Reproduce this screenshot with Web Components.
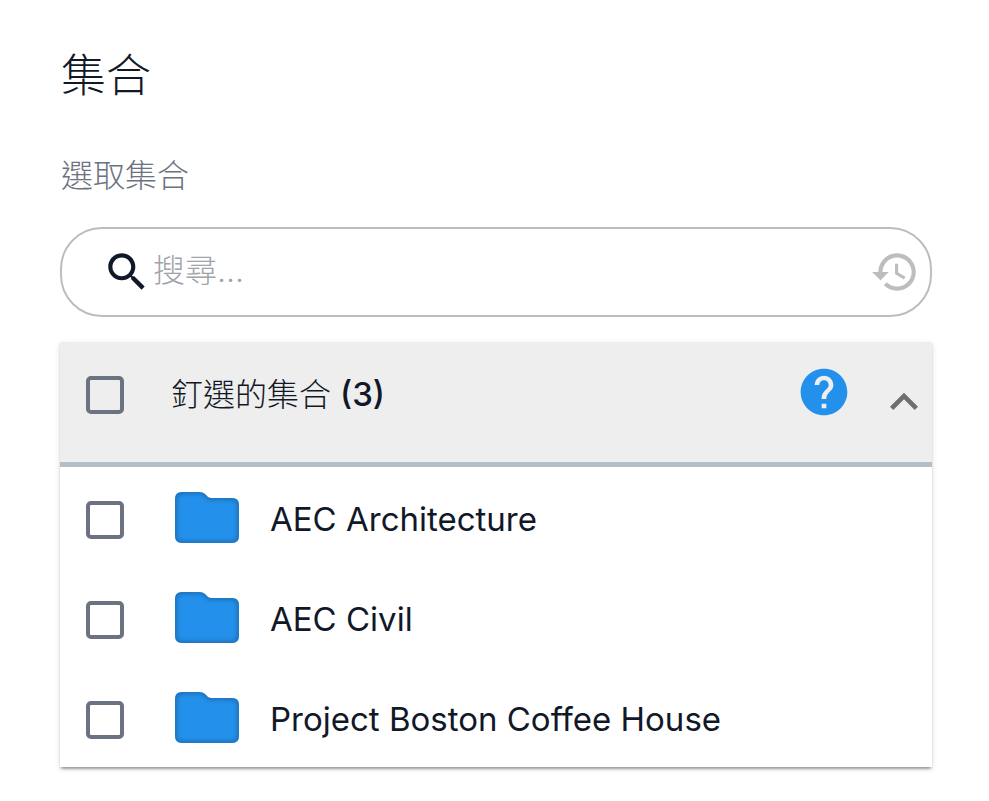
<!DOCTYPE html>
<html lang="zh-Hant">
<head>
<meta charset="utf-8">
<meta name="viewport" content="width=device-width, initial-scale=1">
<title>集合</title>
<style>
  body {
    margin: 0;
    background: #fff;
    color: #111827;
    font-family: Inter, "Noto Sans CJK TC", sans-serif;
    font-size: 33px;
    line-height: 40px;
  }
</style>
</head>
<body>
<collections-panel></collections-panel>

<script>
  const define = (name, html, setup) => {
    const template = document.createElement('template');
    template.innerHTML = html;
    customElements.define(name, class extends HTMLElement {
      connectedCallback() {
        if (this.shadowRoot) return;
        this.attachShadow({ mode: 'open' }).append(template.content.cloneNode(true));
        if (setup) setup(this, this.shadowRoot);
      }
    });
  };

  const checkboxCss = `
    input[type=checkbox] {
      appearance: none;
      flex: none;
      box-sizing: border-box;
      width: 38px;
      height: 38px;
      margin: 0;
      border: 4px solid #6b7280;
      border-radius: 5px;
      cursor: pointer;
    }
    input[type=checkbox]:checked { background: #2391eb; border-color: #2391eb; }`;

  define('search-box', `
    <style>
      :host {
        display: flex;
        align-items: center;
        box-sizing: border-box;
        height: 90px;
        padding: 0 10px 0 40px;
        border: 2px solid #bdbdbd;
        border-radius: 42px;
      }
      svg { display: block; width: 50px; height: 50px; fill: currentColor; }
      label { flex: none; }
      input {
        flex: 1;
        min-width: 0;
        height: 48px;
        padding: 0 0 4px 1px;
        border: 0;
        outline: 0;
        background: none;
        color: inherit;
        font: inherit;
        font-size: 32px;
        font-weight: 300;
      }
      input::placeholder { color: #a0a3a9; opacity: 1; }
      button { flex: none; padding: 0; border: 0; background: none; color: #bdbdbd; cursor: pointer; }
    </style>
    <label for="q" aria-label="搜尋">
      <svg viewBox="0 0 24 24"><path d="M15.5 14h-.79l-.28-.27C15.41 12.59 16 11.11 16 9.5 16 5.91 13.09 3 9.5 3S3 5.91 3 9.5 5.91 16 9.5 16c1.61 0 3.09-.59 4.23-1.57l.27.28v.79l5 4.99L20.49 19l-4.99-5zm-6 0C7.01 14 5 11.99 5 9.5S7.01 5 9.5 5 14 7.01 14 9.5 11.99 14 9.5 14z"/></svg>
    </label>
    <input id="q" type="text" placeholder="搜尋...">
    <button type="button" aria-label="搜尋記錄">
      <svg viewBox="0 0 24 24"><path d="M13 3c-4.97 0-9 4.03-9 9H1l3.89 3.89.07.14L9 12H6c0-3.87 3.13-7 7-7s7 3.13 7 7-3.13 7-7 7c-1.93 0-3.68-.79-4.94-2.06l-1.42 1.42C8.27 19.99 10.51 21 13 21c4.97 0 9-4.03 9-9s-4.03-9-9-9zm-1 5v5l4.28 2.54.72-1.21-3.5-2.08V8H12z"/></svg>
    </button>`);

  define('folder-icon', `
    <style>
      :host { display: block; flex: none; }
      svg { display: block; width: 64px; height: 52px; }
    </style>
    <svg viewBox="0 0 64 52" aria-hidden="true">
      <defs>
        <clipPath id="c"><path d="M7 0H24Q28 0 30 2L33 5Q34.500 6 36 6H57Q64 6 64 13V44Q64 51 57 51H7Q0 51 0 44V7Q0 0 7 0Z"/></clipPath>
        <filter id="b" x="-20%" y="-20%" width="140%" height="140%"><feGaussianBlur stdDeviation="2"/></filter>
      </defs>
      <g clip-path="url(#c)">
        <path fill="#2391eb" d="M0 0H64V52H0Z"/>
        <path fill="none" stroke="#1a6bb0" stroke-width="4" filter="url(#b)" d="M7 0H24Q28 0 30 2L33 5Q34.500 6 36 6H57Q64 6 64 13V44Q64 51 57 51H7Q0 51 0 44V7Q0 0 7 0Z"/>
      </g>
    </svg>`);

  define('collection-row', `
    <style>
      ${checkboxCss}
      :host { display: block; }
      label {
        display: flex;
        align-items: center;
        box-sizing: border-box;
        height: 100px;
        padding: 4px 26px 0;
        cursor: pointer;
      }
      input[type=checkbox] { margin-top: 2px; }
      folder-icon { margin: 0 31px 2px 51px; }
    </style>
    <label><input type="checkbox"><folder-icon></folder-icon><span><slot></slot></span></label>`);

  define('collection-group', `
    <style>
      ${checkboxCss}
      :host {
        display: block;
        background: #fff;
        box-shadow: 0 4px 2px -2px rgba(0,0,0,.2), 0 2px 2px rgba(0,0,0,.14), 0 2px 6px rgba(0,0,0,.12);
      }
      header {
        display: flex;
        align-items: center;
        box-sizing: border-box;
        height: 125px;
        padding: 0 0 20px 26px;
        background: #eee;
        border-bottom: 5px solid #b5bec4;
      }
      input[type=checkbox] { margin: 6px 47px 0 0; }
      label { flex: 1; padding-top: 4px; font-size: 32px; font-weight: 300; }
      b { font-size: 33px; font-weight: 500; }
      button { flex: none; padding: 0; border: 0; background: none; cursor: pointer; }
      svg { display: block; width: 56px; height: 56px; fill: currentColor; }
      .help { margin-right: 24px; color: #2391eb; }
      .toggle { padding-top: 20px; color: #6e6e6e; }
    </style>
    <header>
      <input id="all" type="checkbox">
      <label for="all"><slot name="title"></slot> <b><slot name="count"></slot></b></label>
      <button class="help" type="button" aria-label="說明">
        <svg viewBox="0 0 24 24"><path d="M12 2C6.480 2 2 6.480 2 12s4.480 10 10 10 10-4.480 10-10S17.520 2 12 2zm1 17h-2v-2h2v2zm2.070-7.750l-.9.920C13.450 12.900 13 13.500 13 15h-2v-.5c0-1.100.450-2.100 1.170-2.830l1.240-1.260c.370-.360.590-.860.590-1.410 0-1.100-.9-2-2-2s-2 .9-2 2H8c0-2.210 1.790-4 4-4s4 1.790 4 4c0 .880-.360 1.680-.930 2.250z"/></svg>
      </button>
      <button class="toggle" type="button" aria-label="收合" aria-expanded="true">
        <svg viewBox="0 0 24 24"><path d="M12 8l-6 6 1.410 1.410L12 10.830l4.590 4.580L18 14z"/></svg>
      </button>
    </header>
    <div id="rows"><slot></slot></div>`, (host, root) => {
      const toggle = root.querySelector('.toggle');
      toggle.addEventListener('click', () => {
        const rows = root.getElementById('rows');
        rows.hidden = !rows.hidden;
        toggle.setAttribute('aria-expanded', String(!rows.hidden));
      });
    });

  define('collections-panel', `
    <style>
      :host { display: block; padding: 44px 57px 34px 60px; }
      h1, p { padding-left: 1px; font-weight: 300; }
      h1 { margin: 0; font-size: 45px; line-height: 64px; }
      p { margin: 44px 0 27px; font-size: 32px; line-height: 48px; color: #6b7280; }
      collection-group { margin-top: 25px; }
    </style>
    <h1>集合</h1>
    <p>選取集合</p>
    <search-box></search-box>
    <collection-group>
      <span slot="title">釘選的集合</span><span slot="count">(3)</span>
      <collection-row>AEC Architecture</collection-row>
      <collection-row>AEC Civil</collection-row>
      <collection-row>Project Boston Coffee House</collection-row>
    </collection-group>`);
</script>
</body>
</html>
